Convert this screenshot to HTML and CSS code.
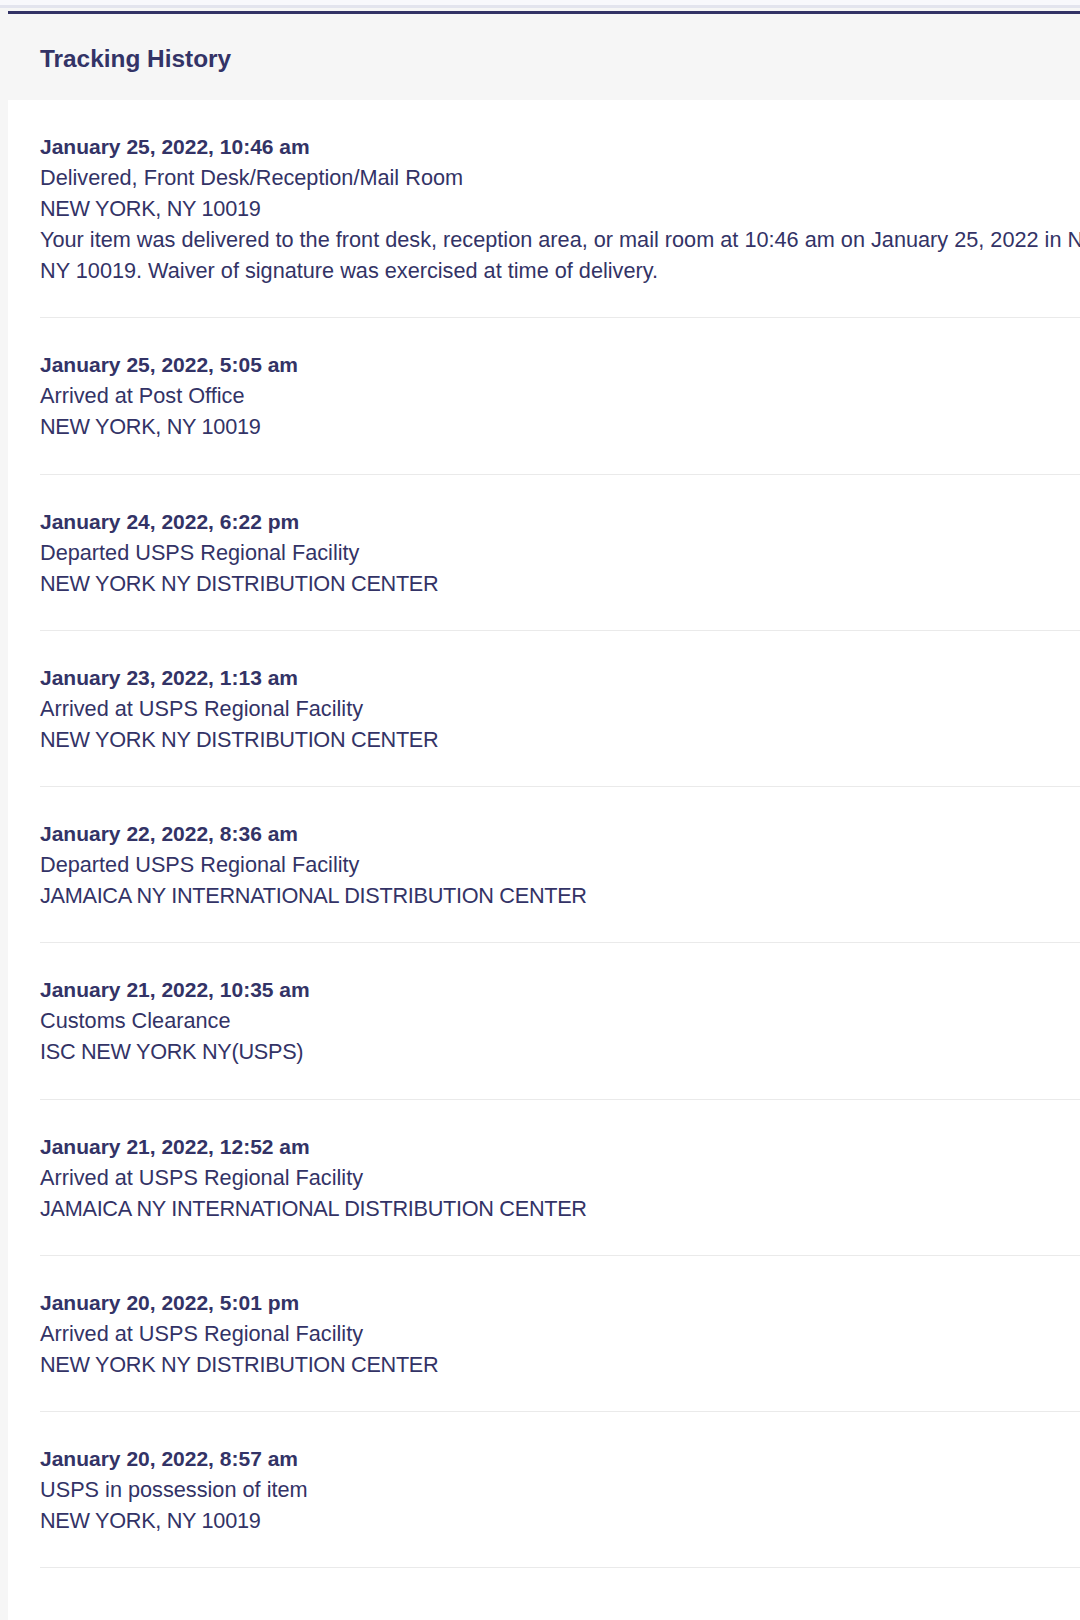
FILE: index.html
```html
<!DOCTYPE html>
<html lang="en">
<head>
    <meta charset="UTF-8">
    <title>Tracking History</title>
    <link rel="stylesheet" href="styles.css">
</head>
<body>
<div class="topBar"></div>
<div class="page">
    <div class="history">
        <h2 class="historyHead">Tracking History</h2>
        <ul class="historyList">
            <li class="event">
                <span class="date">January 25, 2022, 10:46 am</span>
                <span>Delivered, Front Desk/Reception/Mail Room</span>
                <span class="place">NEW YORK, NY 10019</span>
                <p>Your item was delivered to the front desk, reception area, or mail room at 10:46 am on January 25, 2022 in NEW YORK, NY 10019. Waiver of signature was exercised at time of delivery.</p>
            </li>
            <li class="event">
                <span class="date">January 25, 2022, 5:05 am</span>
                <span>Arrived at Post Office</span>
                <span class="place">NEW YORK, NY 10019</span>
            </li>
            <li class="event">
                <span class="date">January 24, 2022, 6:22 pm</span>
                <span>Departed USPS Regional Facility</span>
                <span class="place">NEW YORK NY DISTRIBUTION CENTER</span>
            </li>
            <li class="event">
                <span class="date">January 23, 2022, 1:13 am</span>
                <span>Arrived at USPS Regional Facility</span>
                <span class="place">NEW YORK NY DISTRIBUTION CENTER</span>
            </li>
            <li class="event">
                <span class="date">January 22, 2022, 8:36 am</span>
                <span>Departed USPS Regional Facility</span>
                <span class="place">JAMAICA NY INTERNATIONAL DISTRIBUTION CENTER</span>
            </li>
            <li class="event">
                <span class="date">January 21, 2022, 10:35 am</span>
                <span>Customs Clearance</span>
                <span class="place">ISC NEW YORK NY(USPS)</span>
            </li>
            <li class="event">
                <span class="date">January 21, 2022, 12:52 am</span>
                <span>Arrived at USPS Regional Facility</span>
                <span class="place">JAMAICA NY INTERNATIONAL DISTRIBUTION CENTER</span>
            </li>
            <li class="event">
                <span class="date">January 20, 2022, 5:01 pm</span>
                <span>Arrived at USPS Regional Facility</span>
                <span class="place">NEW YORK NY DISTRIBUTION CENTER</span>
            </li>
            <li class="event">
                <span class="date">January 20, 2022, 8:57 am</span>
                <span>USPS in possession of item</span>
                <span class="place">NEW YORK, NY 10019</span>
            </li>
        </ul>
    </div>
</div>
</body>
</html>
```

FILE: styles.css
```css
* {
    margin: 0;
    padding: 0;
    font-family: "Liberation Sans", Arial, Helvetica, sans-serif;
}
html {
    overflow: hidden;
}
body {
    background: #fff;
    color: #333366;
}
ul, li {
    list-style: none;
}
.topBar {
    height: 5px;
    background: #f8f8fc;
    border-bottom: 3px solid #e3e4ee;
}
/*左侧留一条浅灰色,卡片比窗口宽,右侧被截掉*/
.page {
    padding: 3px 0 0 8px;
    background: #f6f6f6;
}
.history {
    width: 1236px;
    border-top: 3px solid #333366;
    background: #fff;
}
.historyHead {
    padding: 31px 32px 27px;
    background: #f6f6f6;
    font-size: 24.4px;
    line-height: 28px;
    font-weight: bold;
}
.historyList {
    padding: 0 32px 52px;
}
.event {
    padding: 31px 0 31.25px;
    border-bottom: 1px solid #eaeaea;
    font-size: 21.7px;
    line-height: 31px;
}
.event span, .event p {
    display: block;
}
.event .date {
    font-size: 21px;
    font-weight: bold;
}
/*大写地址行原图字形更窄一点*/
.event .place {
    letter-spacing: -0.3px;
}
```
